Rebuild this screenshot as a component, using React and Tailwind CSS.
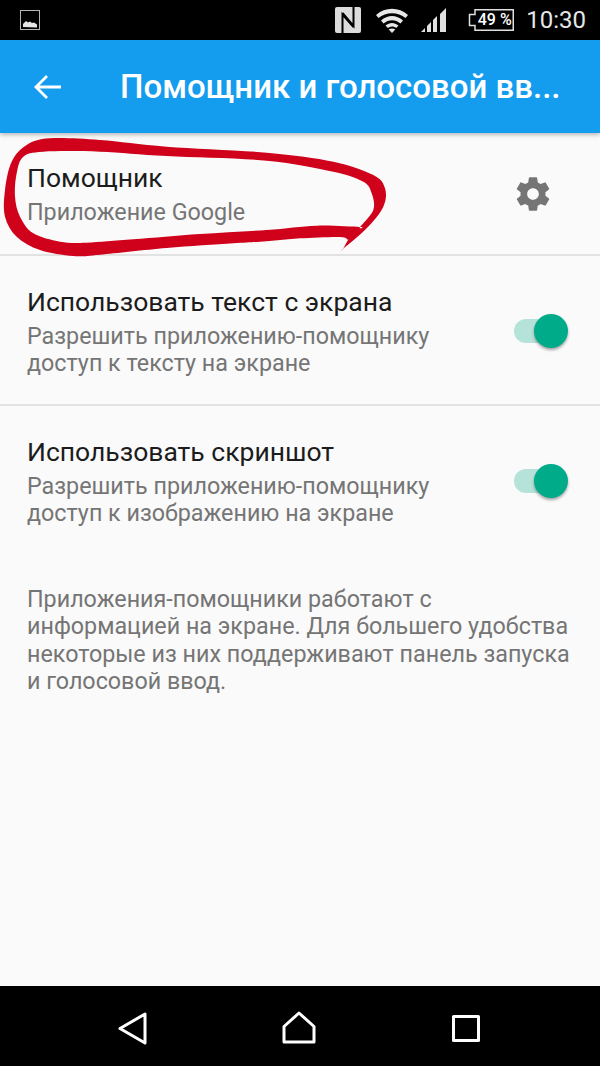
import React from "react";

const outer = [[1029,357],[1029,357],[1100,295],[1150,230],[1155,175],[1120,135],[1000,95],[800,68],[500,50],[300,30],[150,25],[80,45],[35,95],[15,180],[15,260],[50,320],[120,360],[220,378],[300,374],[500,354],[700,340],[800,334],[900,325],[1020,321],[1044,330],[1044,330]];
const inner = [[1080,291],[1080,291],[1120,240],[1115,190],[1090,155],[1000,125],[800,92],[500,78],[300,65],[130,65],[70,80],[50,130],[45,200],[60,260],[100,310],[180,335],[260,338],[400,328],[600,312],[800,300],[950,287]];

function smooth(pts) {
  const n = pts.length;
  let d = `M${pts[0][0]} ${pts[0][1]}`;
  for (let i = 0; i < n; i++) {
    const p0 = pts[(i - 1 + n) % n], p1 = pts[i], p2 = pts[(i + 1) % n], p3 = pts[(i + 2) % n];
    d += `C${p1[0] + (p2[0] - p0[0]) / 6} ${p1[1] + (p2[1] - p0[1]) / 6} ${p2[0] - (p3[0] - p1[0]) / 6} ${p2[1] - (p3[1] - p1[1]) / 6} ${p2[0]} ${p2[1]}`;
  }
  return d + "Z";
}

function Scribble() {
  return (
    <svg className="absolute left-0 top-0 pointer-events-none" width="400" height="135" viewBox="0 0 1200 405">
      <path fillRule="evenodd" fill="#d0021b" d={smooth(outer) + smooth(inner)} />
    </svg>
  );
}

function Switch() {
  return (
    <div className="relative w-[54px] h-[34px] shrink-0">
      <div className="absolute left-0 top-[5px] w-[42px] h-[24px] rounded-full bg-[#b5e3d9]" />
      <div className="absolute left-[20px] top-0 w-[34px] h-[34px] rounded-full bg-[#00ab8a] shadow-[0_2px_3px_rgba(0,0,0,0.35)]" />
    </div>
  );
}

function Row({ title, sub, right, cls, extra }) {
  return (
    <div className={"relative flex justify-between pl-[27px] " + cls}>
      <div>
        <div className="text-[26.5px] leading-[32px] text-[#1c1c1c]">{title}</div>
        <div className="text-[23.3px] leading-[27.3px] mt-[5px] text-[#757575]">{sub}</div>
      </div>
      {right}
      {extra}
    </div>
  );
}

export default function App() {
  return (
    <div className="w-[600px] h-[1066px] flex flex-col bg-[#fafafa] overflow-hidden" style={{ fontFamily: "Roboto, sans-serif" }}>
      <div className="h-[40px] bg-black flex items-center shrink-0 pl-[20px] pr-[14px]">
        <svg width="20" height="20" viewBox="0 0 20 20">
          <rect x="0.5" y="0.5" width="19" height="19" fill="none" stroke="#b5b5b5" />
          <path d="M3 17v-3l3-3 2 1.500 2-1 2 1.500 2-.5 3 2v3z" fill="#e6e6e6" />
        </svg>
        <div className="flex-1" />
        <svg width="26" height="26" viewBox="0 0 26 26" className="mr-[15px]">
          <rect x="0" y="0" width="26" height="26" rx="2" fill="#dcdcdc" />
          <path d="M7.500 26V7.500L18.500 20M18.500 0v19L7.500 6" fill="none" stroke="#000" strokeWidth="2" />
        </svg>
        <svg width="32" height="25" viewBox="0 0 32 25" className="mr-[13px]">
          <path d="M0 7C9-1.500 23-1.500 32 7l-2.500 3C22 3.500 10 3.500 2.500 10z" fill="#e6e6e6" />
          <path d="M5 12.500c6.500-6 15.500-6 22 0l-2.500 3c-5-4.500-12-4.500-17 0z" fill="#e6e6e6" />
          <path d="M9.500 17.500c4-3.500 9-3.500 13 0l-2.300 2.500c-2.600-2-5.800-2-8.400 0z" fill="#e6e6e6" />
          <path d="M16 25l-3.300-3.500c2-1.300 4.600-1.300 6.600 0z" fill="#e6e6e6" />
        </svg>
        <svg width="25" height="24" viewBox="0 0 25 24" className="mr-[22px]">
          <path d="M0 24l4-4v4zM6 24v-6l4-4v10zM12 24V12l4-4v16zM19 24V6l6-6v24z" fill="#e0e0e0" />
        </svg>
        <div className="relative w-[46px] h-[22px] flex items-center justify-center mr-[12px]">
          <svg width="46" height="22" viewBox="0 0 46 22" className="absolute left-0 top-0" fill="none" stroke="#e0e0e0" strokeWidth="1.500">
            <path d="M7 .75h38.250v20.500H7V16.500H1.500v-11H7z" />
          </svg>
          <span className="text-[16px] leading-none font-medium text-white ml-[7px] whitespace-nowrap relative">49 %</span>
        </div>
        <span className="text-[24px] leading-none text-[#e6e6e6]">10:30</span>
      </div>

      <div className="h-[93px] bg-[#149dee] flex items-center shrink-0 shadow-[0_2px_4px_rgba(0,0,0,0.25)] relative z-10 pl-[33px] pr-[40px]">
        <svg width="28" height="26" viewBox="0 0 28 26" fill="none" stroke="#fff" strokeWidth="2.800" className="shrink-0 mr-[59px]">
          <path d="M28 13H3M14 2 3 13l11 11" />
        </svg>
        <div className="text-[33px] font-medium text-white whitespace-nowrap leading-none">Помощник и голосовой вв...</div>
      </div>

      <Row
        cls="h-[123px] pt-[29px] border-b-2 border-[#e2e2e2]"
        title="Помощник"
        sub="Приложение Google"
        right={
          <svg width="40" height="40" viewBox="0 0 24 24" fill="#757575" className="mt-[12px] mr-[47px]">
            <path d="M19.43 12.98c.04-.32.07-.64.07-.98s-.03-.66-.07-.98l2.110-1.650c.19-.15.24-.42.12-.64l-2-3.460c-.12-.22-.39-.3-.61-.22l-2.490 1c-.52-.4-1.080-.73-1.690-.98l-.38-2.650C14.460 2.180 14.250 2 14 2h-4c-.25 0-.46.18-.49.42l-.38 2.650c-.61.25-1.170.59-1.690.98l-2.490-1c-.23-.09-.49 0-.61.22l-2 3.460c-.13.22-.07.49.12.64l2.110 1.650c-.04.32-.07.65-.07.98s.03.66.07.98l-2.110 1.650c-.19.15-.24.42-.12.64l2 3.460c.12.22.39.3.61.22l2.490-1c.52.4 1.080.73 1.690.98l.38 2.650c.03.24.24.42.49.42h4c.25 0 .46-.18.49-.42l.38-2.650c.61-.25 1.170-.59 1.690-.98l2.490 1c.23.09.49 0 .61-.22l2-3.460c.12-.22.07-.49-.12-.64l-2.110-1.650zM12 15.500c-1.930 0-3.500-1.570-3.500-3.500s1.570-3.500 3.500-3.500 3.500 1.570 3.500 3.500-1.570 3.500-3.500 3.500z" />
          </svg>
        }
        extra={<div className="absolute left-0 top-[-3px] w-[400px] h-[135px]"><Scribble /></div>}
      />
      <Row
        cls="h-[150px] pt-[30px] border-b-2 border-[#e2e2e2]"
        title="Использовать текст с экрана"
        sub={<>Разрешить приложению-помощнику<br />доступ к тексту на экране</>}
        right={<div className="mt-[28px] mr-[32px]"><Switch /></div>}
      />
      <Row
        cls="h-[150px] pt-[30px]"
        title="Использовать скриншот"
        sub={<>Разрешить приложению-помощнику<br />доступ к изображению на экране</>}
        right={<div className="mt-[28px] mr-[32px]"><Switch /></div>}
      />
      <div className="flex-1 pl-[27px] pt-[30px] text-[23.3px] leading-[27.3px] text-[#757575]">
        Приложения-помощники работают с<br />
        информацией на экране. Для большего удобства<br />
        некоторые из них поддерживают панель запуска<br />
        и голосовой ввод.
      </div>

      <div className="h-[80px] bg-black shrink-0 relative flex items-center">
        <svg width="30" height="34" viewBox="0 0 30 34" fill="none" stroke="#fff" strokeWidth="3" strokeLinejoin="round" className="ml-[118px] mt-[5px]">
          <path d="M2 16.500 27 2v29z" />
        </svg>
        <svg width="34" height="34" viewBox="0 0 34 34" fill="none" stroke="#fff" strokeWidth="3" strokeLinejoin="round" className="ml-[134px] mt-[4px]">
          <path d="M2 15.500 17 2l15 13.500V31H2z" />
        </svg>
        <svg width="28" height="28" viewBox="0 0 28 28" fill="none" stroke="#fff" strokeWidth="3" strokeLinejoin="round" className="ml-[136px] mt-[6px]">
          <rect x="1.500" y="1.500" width="25" height="24" />
        </svg>
      </div>
    </div>
  );
}
